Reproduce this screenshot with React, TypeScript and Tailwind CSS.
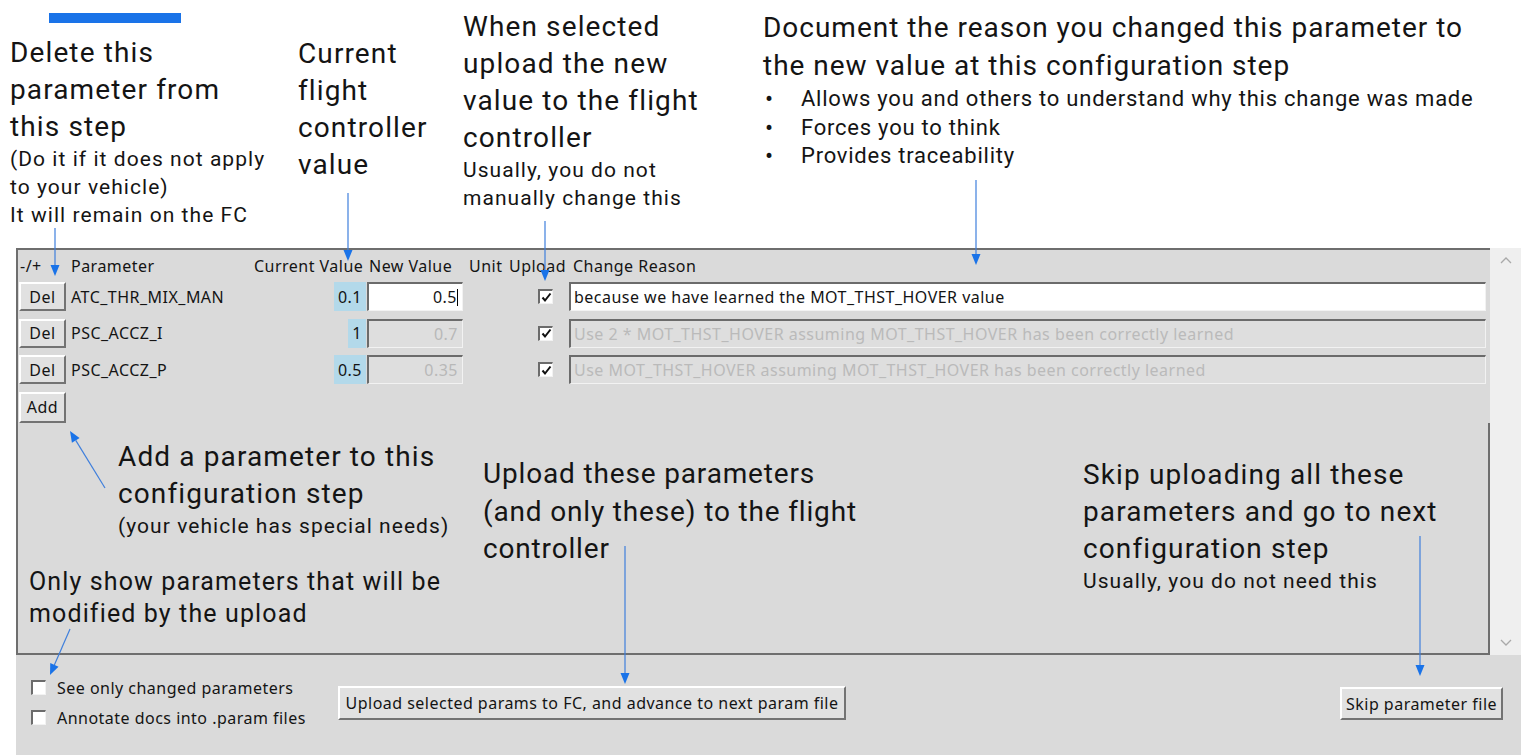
import React from 'react';

const ui = "font-['Noto_Sans',sans-serif] text-[16px] tracking-[0.03em] text-[#141414]";
const note = "font-['Roboto',sans-serif] text-[#141414] whitespace-nowrap";
const big = 'text-[28px] leading-[37px] tracking-[0.04em]';
const small = 'text-[21px] leading-[28px] tracking-[0.05em]';

const raised =
  'bg-[#e1e1e1] border-t-2 border-l-2 border-b-2 border-r-2 border-t-white border-l-white border-b-[#737373] border-r-[#737373]';
const sunken =
  'border-t-2 border-l-2 border-b border-r border-t-[#6b6b6b] border-l-[#6b6b6b] border-b-[#f2f2f2] border-r-[#f2f2f2]';

const rows = [
  { name: 'ATC_THR_MIX_MAN', cur: '0.1', val: '0.5', reason: 'because we have learned the MOT_THST_HOVER value', active: true },
  { name: 'PSC_ACCZ_I', cur: '1', val: '0.7', reason: 'Use 2 * MOT_THST_HOVER assuming MOT_THST_HOVER has been correctly learned', active: false },
  { name: 'PSC_ACCZ_P', cur: '0.5', val: '0.35', reason: 'Use MOT_THST_HOVER assuming MOT_THST_HOVER has been correctly learned', active: false },
];

const arrows = [
  { x1: 55, y1: 228, x2: 55, y2: 276 },
  { x1: 348, y1: 193, x2: 348, y2: 261 },
  { x1: 545, y1: 221, x2: 545, y2: 281 },
  { x1: 976, y1: 180, x2: 976, y2: 265 },
  { x1: 105, y1: 488, x2: 70, y2: 431 },
  { x1: 70, y1: 629, x2: 50, y2: 675 },
  { x1: 625, y1: 546, x2: 625, y2: 684 },
  { x1: 1420, y1: 536, x2: 1420, y2: 676 },
];

function Arrow({ x1, y1, x2, y2 }: { x1: number; y1: number; x2: number; y2: number }) {
  const dx = x2 - x1;
  const dy = y2 - y1;
  const len = Math.hypot(dx, dy);
  const ux = dx / len;
  const uy = dy / len;
  const bx = x2 - ux * 11;
  const by = y2 - uy * 11;
  const w = 4.5;
  const pts = `${x2},${y2} ${bx - uy * w},${by + ux * w} ${bx + uy * w},${by - ux * w}`;
  return (
    <g>
      <line x1={x1} y1={y1} x2={bx} y2={by} stroke="#3f7fdc" strokeWidth={1.2} />
      <polygon points={pts} fill="#1a73e8" />
    </g>
  );
}

function CheckBox({ checked }: { checked?: boolean }) {
  return (
    <div className={`w-[15px] h-[15px] shrink-0 bg-white flex items-center justify-center ${sunken}`}>
      {checked && (
        <svg width="11" height="11" viewBox="0 0 11 11">
          <path d="M1.5 5.5 L4 8.5 L9.5 1.5" stroke="#111" strokeWidth="2" fill="none" />
        </svg>
      )}
    </div>
  );
}

export default function App() {
  return (
    <div className="relative w-[1521px] h-[755px] bg-white overflow-hidden">
      {/* top annotations */}
      <div className={`flex h-[248px] ${note}`}>
        <div className="w-[298px] pl-[10px] pt-[13px]">
          <div className="ml-[39px] w-[132px] h-[10px] bg-[#1a73e8]" />
          <div className={`mt-[11px] ${big}`}>
            Delete this<br />parameter from<br />this step
          </div>
          <div className={small}>
            (Do it if it does not apply<br />to your vehicle)<br />It will remain on the FC
          </div>
        </div>
        <div className="w-[165px] pt-[35px]">
          <div className={big}>
            Current<br />flight<br />controller<br />value
          </div>
        </div>
        <div className="w-[300px] pt-[8px]">
          <div className={big}>
            When selected<br />upload the new<br />value to the flight<br />controller
          </div>
          <div className={small}>
            Usually, you do not<br />manually change this
          </div>
        </div>
        <div className="flex-1 pt-[9px]">
          <div className="text-[28px] leading-[38px] tracking-[0.035em]">
            Document the reason you changed this parameter to<br />the new value at this configuration step
          </div>
          <ul className="text-[22px] leading-[28.5px] tracking-[0.035em]">
            {['Allows you and others to understand why this change was made', 'Forces you to think', 'Provides traceability'].map((t) => (
              <li key={t} className="flex">
                <span className="w-[38px] pl-[2px] text-[24px] leading-[28.5px]">•</span>
                {t}
              </li>
            ))}
          </ul>
        </div>
      </div>

      {/* parameter panel */}
      <div className={`flex h-[407px] ml-[16px] ${ui}`}>
        <div className="flex-1 flex flex-col bg-[#dadada] border-t-2 border-l-2 border-b-2 border-[#6e6e6e]">
          <div className="flex h-[32px] items-center pl-[1px] whitespace-nowrap">
            <span className="w-[52px] pl-[1px]">-/+</span>
            <span className="w-[183px]">Parameter</span>
            <span className="w-[113px]">Current Value</span>
            <span className="w-[102px] pl-[2px]">New Value</span>
            <span className="w-[40px]">Unit</span>
            <span className="w-[64px]">Upload</span>
            <span>Change Reason</span>
          </div>
          <div className="flex flex-col gap-[7.5px] pl-[1px]">
            {rows.map((r) => (
              <div key={r.name} className="flex h-[29px] items-stretch whitespace-nowrap">
                <button className={`w-[47px] flex items-center justify-center ${raised}`}>Del</button>
                <div className="w-[188px] pl-[5px] flex items-center">{r.name}</div>
                <div className="w-[112px] flex items-stretch justify-end">
                  <span className="bg-[#b3d9ea] px-[4px] flex items-center">{r.cur}</span>
                </div>
                <div
                  className={`w-[96px] ml-[1px] flex items-center justify-end pr-[4px] ${sunken} ${
                    r.active ? 'bg-white' : 'bg-[#dedede] text-[#b8b8b8]'
                  }`}
                >
                  {r.val}
                  {r.active && <span className="w-px h-[17px] bg-black" />}
                </div>
                <div className="w-[46px]" />
                <div className="w-[60px] pl-[29px] flex items-center">
                  <CheckBox checked />
                </div>
                <div
                  className={`flex-1 mr-[4px] flex items-center pl-[3px] overflow-hidden ${sunken} ${
                    r.active ? 'bg-white' : 'bg-[#dedede] text-[#bababa]'
                  }`}
                >
                  {r.reason}
                </div>
              </div>
            ))}
            <div className="flex h-[31px]">
              <button className={`w-[47px] flex items-center justify-center ${raised}`}>Add</button>
            </div>
          </div>
          <div className="flex-1 border-r-2 border-[#6e6e6e]" />
        </div>
        <div className="w-[31px] bg-[#efefef] flex flex-col items-center justify-between py-[8px]">
          <svg width="12" height="8" viewBox="0 0 12 8">
            <path d="M1 7 L6 2 L11 7" stroke="#a9a9a9" strokeWidth="1.3" fill="none" />
          </svg>
          <svg width="12" height="8" viewBox="0 0 12 8">
            <path d="M1 1 L6 6 L11 1" stroke="#a9a9a9" strokeWidth="1.3" fill="none" />
          </svg>
        </div>
      </div>

      {/* bottom controls */}
      <div className={`flex h-[100px] ml-[16px] bg-[#dadada] ${ui}`}>
        <div className="w-[322px] pl-[15px] pt-[25px] flex flex-col gap-[15px] whitespace-nowrap">
          <div className="flex items-center gap-[11px] h-[15px]">
            <CheckBox />
            <span>See only changed parameters</span>
          </div>
          <div className="flex items-center gap-[11px] h-[15px]">
            <CheckBox />
            <span>Annotate docs into .param files</span>
          </div>
        </div>
        <button className={`mt-[31px] w-[508px] h-[34px] whitespace-nowrap ${raised}`}>
          Upload selected params to FC, and advance to next param file
        </button>
        <div className="flex-1" />
        <button className={`mt-[32px] mr-[18px] w-[163px] h-[33px] whitespace-nowrap ${raised}`}>
          Skip parameter file
        </button>
      </div>

      {/* annotations over the dialog */}
      <div className={`absolute left-[118px] top-[439px] ${note}`}>
        <div className="text-[28px] leading-[36.5px] tracking-[0.04em]">
          Add a parameter to this<br />configuration step
        </div>
        <div className={small}>(your vehicle has special needs)</div>
      </div>
      <div className={`absolute left-[483px] top-[455px] ${note} text-[28px] leading-[37.5px] tracking-[0.03em]`}>
        Upload these parameters<br />(and only these) to the flight<br />controller
      </div>
      <div className={`absolute left-[1083px] top-[456px] ${note}`}>
        <div className={big}>
          Skip uploading all these<br />parameters and go to next<br />configuration step
        </div>
        <div className={small}>Usually, you do not need this</div>
      </div>
      <div className={`absolute left-[29px] top-[566px] ${note} text-[25px] leading-[32px] tracking-[0.045em]`}>
        Only show parameters that will be<br />modified by the upload
      </div>

      <svg className="absolute inset-0 pointer-events-none" width="1521" height="755">
        {arrows.map((a, i) => (
          <Arrow key={i} {...a} />
        ))}
      </svg>
    </div>
  );
}
